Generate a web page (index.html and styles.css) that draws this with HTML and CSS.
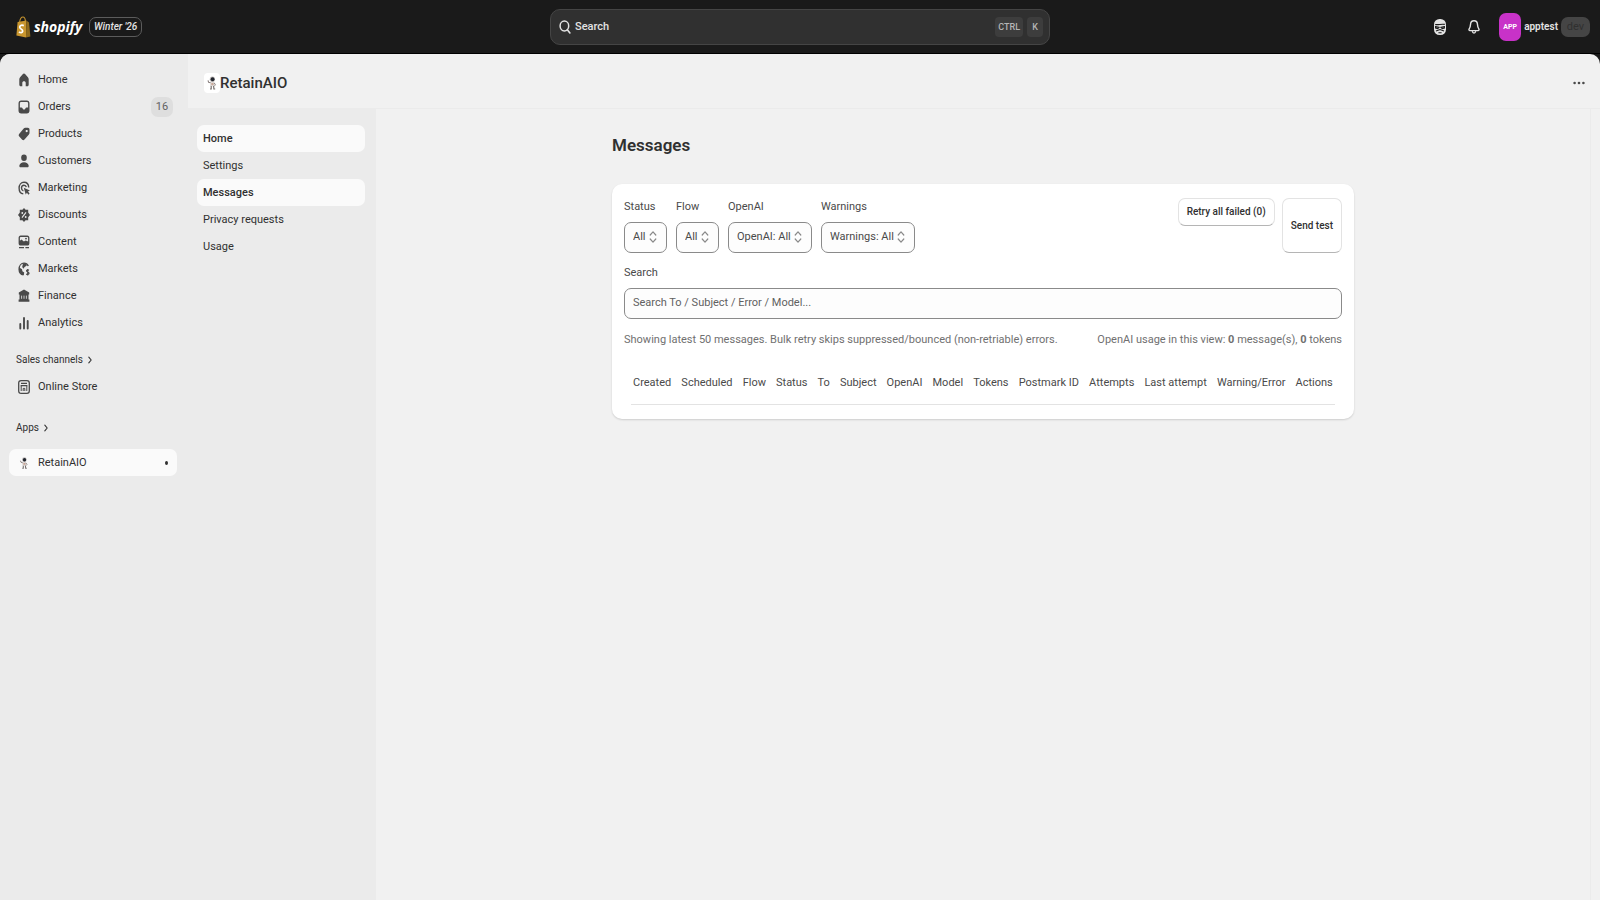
FILE: index.html
```
<!DOCTYPE html>
<html lang="en">
<head>
    <meta charset="UTF-8">
    <meta name="viewport" content="width=device-width, initial-scale=1.0">
    <title>RetainAIO - Messages</title>
    <link rel="stylesheet" href="styles.css">
</head>
<body>

    <!-- Shared drawings -->
    <svg class="sprite" aria-hidden="true">
        <symbol id="icon-astronaut" viewBox="0 0 12 16">
            <path d="M4.4 7.2h3.8l.4 4H4.2z" fill="#d8d2cf"/>
            <path d="M4.6 7.8 2.6 7.2 2 5.4" fill="none" stroke="#8b8280" stroke-width="1.1"/>
            <path d="M8.2 7.8l1.2 2-.8 1" fill="none" stroke="#8b8280" stroke-width="1"/>
            <path d="M5.2 11v3H4M7.6 11l.3 3h1.3" fill="none" stroke="#77706e" stroke-width="1.2"/>
            <path d="M5.4 8.2h2v1.6h-2z" fill="#c79a86"/>
            <ellipse cx="6.4" cy="4.2" rx="2.6" ry="2.8" fill="#bdb9b8"/>
            <ellipse cx="6.6" cy="4.2" rx="1.9" ry="2" fill="#22262e"/>
        </symbol>
        <symbol id="icon-select" viewBox="0 0 8 14">
            <path d="M1.2 5 4 1.8 6.8 5M1.2 9 4 12.2 6.8 9" fill="none" stroke="currentColor" stroke-width="1.2" stroke-linecap="round" stroke-linejoin="round"/>
        </symbol>
        <symbol id="icon-chevron" viewBox="0 0 6 8">
            <path d="M1.8 1.2 4.2 4 1.8 6.8" fill="none" stroke="currentColor" stroke-width="1.1" stroke-linecap="round" stroke-linejoin="round"/>
        </symbol>
    </svg>

    <header class="topbar">
        <div class="brand">
            <svg class="brand-bag" viewBox="0 0 15 22" aria-hidden="true">
                <path d="M1.6 6 10.4 4.6 10 21.6.4 19.6z" fill="#c9962f"/>
                <path d="M10.4 4.6 13 6.4 14.4 20.4 10 21.6z" fill="#8f6a1c"/>
                <path d="M3.6 6.2C4 3 5.6 1 7 1s2.2 1.6 2.4 4" fill="none" stroke="#c9962f" stroke-width="1.1"/>
                <path d="M7.8 9.6C5.4 8.6 3.6 9.6 3.7 11.2c.1 2 3.2 2 3 4-.2 1.8-2.3 1.8-3.7.6" fill="none" stroke="#fff" stroke-width="1.7"/>
            </svg>
            <span class="brand-name">shopify</span>
            <span class="edition">Winter '26</span>
        </div>

        <button type="button" class="global-search">
            <svg class="search-icon" viewBox="0 0 12 14" aria-hidden="true">
                <ellipse cx="5.4" cy="6" rx="4.3" ry="4.9" fill="none" stroke="currentColor" stroke-width="1.5"/>
                <path d="M8.3 9.8 10.9 13" stroke="currentColor" stroke-width="1.6" stroke-linecap="round"/>
            </svg>
            <span class="global-search-text">Search</span>
            <kbd>CTRL</kbd>
            <kbd>K</kbd>
        </button>

        <div class="account">
            <button type="button" class="icon-btn" aria-label="Sidekick">
                <svg viewBox="0 0 14 16" aria-hidden="true">
                    <rect x="1" y="0" width="12" height="16" rx="5.5" fill="#e3e3e3"/>
                    <path d="M2.2 5.4c2.6 1 6-.8 9.6 0M2.6 7.6l3.4.8-1.2 1.2-2.2-.6zM11.4 7.6 8 8.4l1.2 1.2 2.2-.6zM3 12l4-1.4L11 12M5.4 13.8h3.2" fill="none" stroke="#1a1a1a" stroke-width="1.1"/>
                </svg>
            </button>
            <button type="button" class="icon-btn" aria-label="Notifications">
                <svg viewBox="0 0 14 16" aria-hidden="true">
                    <path d="M7 1.8c-2.2 0-3.4 1.6-3.5 3.8C3.4 8 3 8.6 2.2 9.8c-.6 1-.2 1.8.8 1.8h8c1 0 1.4-.8.8-1.8C11 8.6 10.6 8 10.5 5.6 10.4 3.4 9.2 1.8 7 1.8z" fill="none" stroke="#e3e3e3" stroke-width="1.4"/>
                    <path d="M5.3 12.2c.2 1.2.9 1.9 1.7 1.9s1.5-.7 1.7-1.9" fill="none" stroke="#e3e3e3" stroke-width="1.3"/>
                </svg>
            </button>
            <button type="button" class="store-btn">
                <span class="avatar">APP</span>
                <span class="store-name">apptest</span>
                <span class="env">dev</span>
            </button>
        </div>
    </header>

    <div class="frame">
        <nav class="main-nav" aria-label="Main">
            <ul>
                <li><a href="#">
                    <svg viewBox="0 0 12 14" aria-hidden="true"><path d="M6 .6c.5 0 .9.2 1.3.6l2.6 3c.5.6.8 1.2.8 2v5.2c0 1.2-.5 1.8-1.5 1.8H7.7V9.8C7.7 8.8 7 8.2 6 8.2s-1.7.6-1.7 1.6v3.4H2.8c-1 0-1.5-.6-1.5-1.8V6.2c0-.8.3-1.4.8-2l2.6-3C5.1.8 5.5.6 6 .6z"/></svg>
                    Home</a></li>
                <li><a href="#">
                    <svg viewBox="0 0 12 14" aria-hidden="true"><path fill-rule="evenodd" d="M3.2.5h5.6C10.5.5 11.5 1.6 11.5 3.5v7c0 2-1 3-2.7 3H3.2C1.5 13.5.5 12.5.5 10.5v-7C.5 1.6 1.5.5 3.2.5zM3.2 2C2.3 2 1.9 2.5 1.9 3.5v4h1.5c.6 0 .9.3 1.1.8.3.8.7 1.2 1.5 1.2s1.2-.4 1.5-1.2c.2-.5.5-.8 1.1-.8h1.5v-4c0-1-.4-1.5-1.3-1.5z"/></svg>
                    Orders <span class="count">16</span></a></li>
                <li><a href="#">
                    <svg viewBox="0 0 12 14" aria-hidden="true"><path fill-rule="evenodd" d="M7.2.8h2.6c1 0 1.7.7 1.7 1.9v3c0 .7-.2 1.3-.6 1.8l-4.4 5c-.8.9-1.7.9-2.5 0L1.3 9.6c-.8-.9-.8-2 0-2.9l4.4-5.2c.4-.5.9-.7 1.5-.7zM8.7 5.3c.7 0 1.1-.5 1.1-1.2S9.4 2.9 8.7 2.9s-1.1.5-1.1 1.2.4 1.2 1.1 1.2z"/></svg>
                    Products</a></li>
                <li><a href="#">
                    <svg viewBox="0 0 12 14" aria-hidden="true"><ellipse cx="6" cy="3.7" rx="2.8" ry="3.2"/><path d="M6 8.2c2.5 0 4.3 1.2 4.7 3.5.1.9-.4 1.5-1.2 1.5h-7c-.8 0-1.3-.6-1.2-1.5C1.7 9.4 3.5 8.2 6 8.2z"/></svg>
                    Customers</a></li>
                <li><a href="#">
                    <svg viewBox="0 0 12 14" aria-hidden="true"><path d="M10.7 6.5C10.6 3.2 8.6 1.2 6 1.2 3.2 1.2 1.1 3.7 1.1 7s1.7 5.6 4.2 5.9" fill="none" stroke="currentColor" stroke-width="1.4"/><path d="M8.3 6.2C8 4.9 7.2 4.2 6 4.2c-1.5 0-2.5 1.2-2.5 2.9 0 1.6.7 2.5 1.9 2.8" fill="none" stroke="currentColor" stroke-width="1.4"/><path d="M5.8 6.8 11.9 9.4 10 10.6l1.6 2-1.1 1.1-1.6-2-1.2 1.7z"/></svg>
                    Marketing</a></li>
                <li><a href="#">
                    <svg viewBox="0 0 12 14" aria-hidden="true"><path d="M6 0 7.6 1.7h2.6v2.9L12 7l-1.8 2.3v3H7.6L6 14l-1.6-1.7H1.8v-3L0 7l1.8-2.4V1.7h2.6z"/><path d="M8 4.4 4 9.6" stroke="#ebebeb" stroke-width="1.1"/><circle cx="4.3" cy="5" r=".9" fill="#ebebeb"/><circle cx="7.7" cy="9" r=".9" fill="#ebebeb"/></svg>
                    Discounts</a></li>
                <li><a href="#">
                    <svg viewBox="0 0 12 14" aria-hidden="true"><path fill-rule="evenodd" d="M2.7.5h6.6c1.3 0 2.1 1 2.1 2.3v5.4c0 1.4-.8 2.3-2.1 2.3H2.7C1.4 10.5.6 9.6.6 8.2V2.8C.6 1.5 1.4.5 2.7.5zM2.7 1.9c-.5 0-.8.3-.8.9v3l1.5-1.4 2.5 2 1.8-1 2.4 1V2.8c0-.6-.3-.9-.8-.9z"/><circle cx="8" cy="3.6" r=".9"/><path d="M1 12.6h5M7.4 12.6H11" stroke="currentColor" stroke-width="1.3"/></svg>
                    Content</a></li>
                <li><a href="#">
                    <svg viewBox="0 0 12 14" aria-hidden="true"><path d="M10.3 4C9.4 2 7.9 1.1 6 1.1 3.2 1.1 1.1 3.7 1.1 7s1.8 5.6 4.3 5.9" fill="none" stroke="currentColor" stroke-width="1.3"/><path d="M1.3 5.6 4 7.2l.4 2 1.8 1.2-.4 2.8L2.5 11.6.8 8zM5 1.2l3 .6.8 1.6L6.6 5 5.4 6.7 4.2 5z"/><path d="M11 8.2C9.7 7.5 8.4 7.9 8.5 9c.1 1.2 2.6.9 2.6 2.3 0 1.2-1.7 1.5-2.9.7M9.7 6.9v6.6" fill="none" stroke="currentColor" stroke-width="1.1"/></svg>
                    Markets</a></li>
                <li><a href="#">
                    <svg viewBox="0 0 12 14" aria-hidden="true"><path d="M6 .6 11.2 3.4v2H.8v-2zM1.5 5.4h9v5.2h-9zM.6 10.6h10.8v2.2H.6z"/><path d="M3.6 6.6v3.2M6 6.6v3.2M8.4 6.6v3.2" stroke="#ebebeb" stroke-width=".8"/></svg>
                    Finance</a></li>
                <li><a href="#">
                    <svg viewBox="0 0 12 14" aria-hidden="true"><path d="M2.3 8v4.5M6 2v10.5M9.7 5v7.5" stroke="currentColor" stroke-width="1.9" stroke-linecap="round"/></svg>
                    Analytics</a></li>
            </ul>

            <a class="nav-heading" href="#">Sales channels <svg aria-hidden="true"><use href="#icon-chevron"/></svg></a>
            <ul>
                <li><a href="#">
                    <svg viewBox="0 0 12 14" aria-hidden="true"><rect x=".7" y=".7" width="10.6" height="12.6" rx="2.4" fill="none" stroke="currentColor" stroke-width="1.3"/><path d="M3 3.4h6M2.6 5.6h6.8" fill="none" stroke="currentColor" stroke-width="1.2"/><path d="M3.2 6v5M8.8 6v5M5.2 11V8.4h1.6V11" fill="none" stroke="currentColor" stroke-width="1"/></svg>
                    Online Store</a></li>
            </ul>

            <a class="nav-heading nav-heading-apps" href="#">Apps <svg aria-hidden="true"><use href="#icon-chevron"/></svg></a>
            <ul>
                <li><a class="active" href="#">
                    <svg aria-hidden="true"><use href="#icon-astronaut"/></svg>
                    RetainAIO <span class="dot"></span></a></li>
            </ul>
        </nav>

        <div class="app">
            <div class="app-header">
                <span class="app-logo"><svg aria-hidden="true"><use href="#icon-astronaut"/></svg></span>
                <span class="app-name">RetainAIO</span>
                <button type="button" class="more-btn" aria-label="More actions">
                    <svg viewBox="0 0 12 4" aria-hidden="true"><circle cx="1.6" cy="2" r="1.3"/><circle cx="6" cy="2" r="1.3"/><circle cx="10.4" cy="2" r="1.3"/></svg>
                </button>
            </div>

            <div class="app-body">
                <nav class="app-nav" aria-label="RetainAIO">
                    <a class="active" href="#">Home</a>
                    <a href="#">Settings</a>
                    <a class="active" href="#">Messages</a>
                    <a href="#">Privacy requests</a>
                    <a href="#">Usage</a>
                </nav>

                <main class="content">
                    <div class="page">
                        <h1>Messages</h1>

                        <section class="card">
                            <div class="toolbar">
                                <div class="filters">
                                    <div class="field">
                                        <label for="status">Status</label>
                                        <div class="select">
                                            <select id="status"><option>All</option></select>
                                            <svg aria-hidden="true"><use href="#icon-select"/></svg>
                                        </div>
                                    </div>
                                    <div class="field">
                                        <label for="flow">Flow</label>
                                        <div class="select">
                                            <select id="flow"><option>All</option></select>
                                            <svg aria-hidden="true"><use href="#icon-select"/></svg>
                                        </div>
                                    </div>
                                    <div class="field">
                                        <label for="openai">OpenAI</label>
                                        <div class="select">
                                            <select id="openai"><option>OpenAI: All</option></select>
                                            <svg aria-hidden="true"><use href="#icon-select"/></svg>
                                        </div>
                                    </div>
                                    <div class="field">
                                        <label for="warnings">Warnings</label>
                                        <div class="select">
                                            <select id="warnings"><option>Warnings: All</option></select>
                                            <svg aria-hidden="true"><use href="#icon-select"/></svg>
                                        </div>
                                    </div>
                                </div>
                                <div class="actions">
                                    <button type="button" class="btn btn-retry">Retry all failed (0)</button>
                                    <button type="button" class="btn">Send test</button>
                                </div>
                            </div>

                            <div class="field">
                                <label for="search">Search</label>
                                <input type="text" id="search" placeholder="Search To / Subject / Error / Model...">
                            </div>

                            <div class="notes">
                                <span>Showing latest 50 messages. Bulk retry skips suppressed/bounced (non-retriable) errors.</span>
                                <span>OpenAI usage in this view: <b>0</b> message(s), <b>0</b> tokens</span>
                            </div>

                            <table>
                                <thead>
                                    <tr>
                                        <th>Created</th>
                                        <th>Scheduled</th>
                                        <th>Flow</th>
                                        <th>Status</th>
                                        <th>To</th>
                                        <th>Subject</th>
                                        <th>OpenAI</th>
                                        <th>Model</th>
                                        <th>Tokens</th>
                                        <th>Postmark ID</th>
                                        <th>Attempts</th>
                                        <th>Last attempt</th>
                                        <th>Warning/Error</th>
                                        <th>Actions</th>
                                    </tr>
                                </thead>
                            </table>
                        </section>
                    </div>
                </main>
            </div>
        </div>
    </div>

</body>
</html>
```
FILE: styles.css
```
* {
    box-sizing: border-box;
}
body {
    margin: 0;
    min-height: 100vh;
    display: flex;
    flex-direction: column;
    background-color: #1a1a1a;
    color: #303030;
    font-family: Roboto, "Liberation Sans", sans-serif;
    font-size: 11px;
    line-height: 16px;
}
button, input, select {
    font: inherit;
    color: inherit;
}
button {
    border: none;
    background: none;
    padding: 0;
    cursor: pointer;
}
a {
    color: inherit;
    text-decoration: none;
}
ul {
    list-style: none;
    margin: 0;
    padding: 0;
}
.sprite {
    position: absolute;
    width: 0;
    height: 0;
}

/* Top bar */
.topbar {
    display: grid;
    grid-template-columns: 1fr 500px 1fr;
    align-items: center;
    height: 54px;
    border-bottom: 1px solid #000;
    color: #e3e3e3;
}
.brand {
    display: flex;
    align-items: center;
    padding-left: 16px;
}
.brand-bag {
    width: 15px;
    height: 22px;
    margin-right: 3px;
}
.brand-name {
    width: 55px;
    color: #fff;
    font-family: "Open Sans", sans-serif;
    font-size: 14px;
    font-weight: 700;
    font-style: italic;
}
.edition {
    height: 20px;
    line-height: 18px;
    padding: 0 4px;
    border: 1px solid #5c5c5c;
    border-radius: 7px;
    font-size: 10px;
    font-weight: 500;
    font-style: italic;
}
.global-search {
    display: flex;
    align-items: center;
    gap: 4px;
    height: 36px;
    padding: 0 6px 0 8px;
    background-color: #303030;
    border: 1px solid #454545;
    border-radius: 10px;
    text-align: left;
}
.search-icon {
    width: 12px;
    height: 14px;
}
.global-search-text {
    flex: 1;
    font-weight: 500;
}
kbd {
    min-width: 16px;
    height: 20px;
    line-height: 20px;
    padding: 0 3px;
    border-radius: 4px;
    background-color: #3d3d3d;
    color: #b5b5b5;
    font-family: inherit;
    font-size: 9px;
    font-weight: 500;
    text-align: center;
}
.account {
    display: flex;
    justify-content: flex-end;
    align-items: center;
    gap: 16px;
    padding-right: 10px;
}
.icon-btn {
    width: 18px;
}
.icon-btn svg {
    display: block;
    width: 14px;
    height: 16px;
    margin: 0 auto;
}
.store-btn {
    display: flex;
    align-items: center;
    gap: 3px;
}
.avatar {
    width: 22px;
    height: 28px;
    line-height: 28px;
    border-radius: 7px;
    background-color: #c832c8;
    color: #fff;
    font-size: 7px;
    font-weight: 700;
}
.store-name {
    font-size: 10px;
    font-weight: 600;
}
.env {
    width: 29px;
    height: 20px;
    line-height: 20px;
    border-radius: 7px;
    background-color: #454545;
    color: #303030;
}

/* Frame */
.frame {
    flex: 1;
    display: flex;
    background-color: #f1f1f1;
    border-radius: 10px 10px 0 0;
    overflow: hidden;
}
.main-nav {
    width: 188px;
    padding: 12px 11px 12px 9px;
    background-color: #ebebeb;
}
.main-nav li a {
    display: flex;
    align-items: center;
    height: 27px;
    padding: 0 9px;
    border-radius: 7px;
}
.main-nav li svg {
    width: 12px;
    height: 14px;
    margin-right: 8px;
    fill: #4a4a4a;
    color: #4a4a4a;
}
.main-nav .active, .app-nav .active {
    background-color: #fafafa;
}
.count {
    margin-left: auto;
    margin-right: -5px;
    width: 22px;
    height: 20px;
    line-height: 20px;
    border-radius: 7px;
    background-color: #dedede;
    color: #616161;
    text-align: center;
}
.nav-heading {
    display: flex;
    align-items: center;
    gap: 4px;
    margin: 11px 0 0;
    padding: 5px 7px;
    font-size: 10px;
}
.nav-heading-apps {
    margin: 15px 0 8px;
}
.nav-heading svg {
    width: 6px;
    height: 8px;
}
.dot {
    width: 3px;
    height: 4px;
    margin-left: auto;
    border-radius: 50%;
    background-color: #303030;
}
.app {
    flex: 1;
    display: flex;
    flex-direction: column;
}
.app-header {
    display: flex;
    align-items: center;
    height: 55px;
    padding: 3px 15px 0 16px;
    border-bottom: 1px solid #ebebeb;
}
.app-logo {
    width: 16px;
    height: 20px;
    padding: 2px;
    border-radius: 4px;
    background-color: #fff;
}
.app-logo svg {
    display: block;
    width: 12px;
    height: 16px;
}
.app-name {
    flex: 1;
    font-size: 15px;
    font-weight: 500;
}
.more-btn svg {
    display: block;
    width: 12px;
    height: 4px;
    fill: #4a4a4a;
}
.app-body {
    flex: 1;
    display: flex;
}
.app-nav {
    display: flex;
    flex-direction: column;
    width: 188px;
    padding: 16px 11px 16px 9px;
    background-color: #ebebeb;
}
.app-nav a {
    height: 27px;
    line-height: 27px;
    padding: 0 6px;
    border-radius: 7px;
}
.app-nav .active {
    font-weight: 500;
}

/* Page content */
.content {
    flex: 1;
    margin-right: 9px;
    padding: 24px 20px;
    border-right: 1px solid #ebebeb;
}
.page {
    max-width: 742px;
    margin: 0 auto;
}
h1 {
    margin: 0 0 27px;
    font-size: 17px;
    font-weight: 600;
    line-height: 24px;
}
.card {
    padding: 14px 12px;
    border-radius: 10px;
    background-color: #fff;
    box-shadow: 0 1px 2px rgba(0, 0, 0, 0.15);
}
.toolbar {
    display: flex;
    justify-content: space-between;
    margin-bottom: 11px;
}
.filters {
    display: flex;
    gap: 9px;
}
.field {
    display: flex;
    flex-direction: column;
    gap: 6px;
}
.field label {
    line-height: 18px;
    color: #4a4a4a;
}
.select {
    position: relative;
}
.select select {
    display: block;
    appearance: none;
    height: 31px;
    padding: 0 20px 2px 8px;
    border: 1px solid #8a8a8a;
    border-radius: 7px;
    background-color: #fdfdfd;
    color: #4a4a4a;
}
.select svg {
    position: absolute;
    right: 10px;
    top: 8px;
    width: 8px;
    height: 14px;
    color: #8a8a8a;
    pointer-events: none;
}
.actions {
    display: flex;
    gap: 7px;
}
.btn {
    padding: 0 8px;
    border: 1px solid #e3e3e3;
    border-bottom-color: #b5b5b5;
    border-radius: 7px;
    background-color: #fff;
    font-size: 10px;
    font-weight: 500;
}
.btn-retry {
    align-self: flex-start;
    height: 28px;
}
.field input {
    height: 31px;
    padding: 0 8px 2px;
    border: 1px solid #8a8a8a;
    border-radius: 7px;
    background-color: #fdfdfd;
}
.field input::placeholder {
    color: #616161;
    opacity: 1;
}
.notes {
    display: flex;
    justify-content: space-between;
    gap: 16px;
    margin-top: 13px;
    color: #707070;
}
table {
    width: 100%;
    margin-top: 16px;
    padding: 0 7px;
    border-spacing: 0;
    white-space: nowrap;
}
th {
    padding: 11px 5px 13px;
    border-bottom: 1px solid #e3e3e3;
    color: #4a4a4a;
    font-weight: 400;
    text-align: left;
}
th:first-child {
    padding-left: 2px;
}
th:last-child {
    padding-right: 2px;
}
```
